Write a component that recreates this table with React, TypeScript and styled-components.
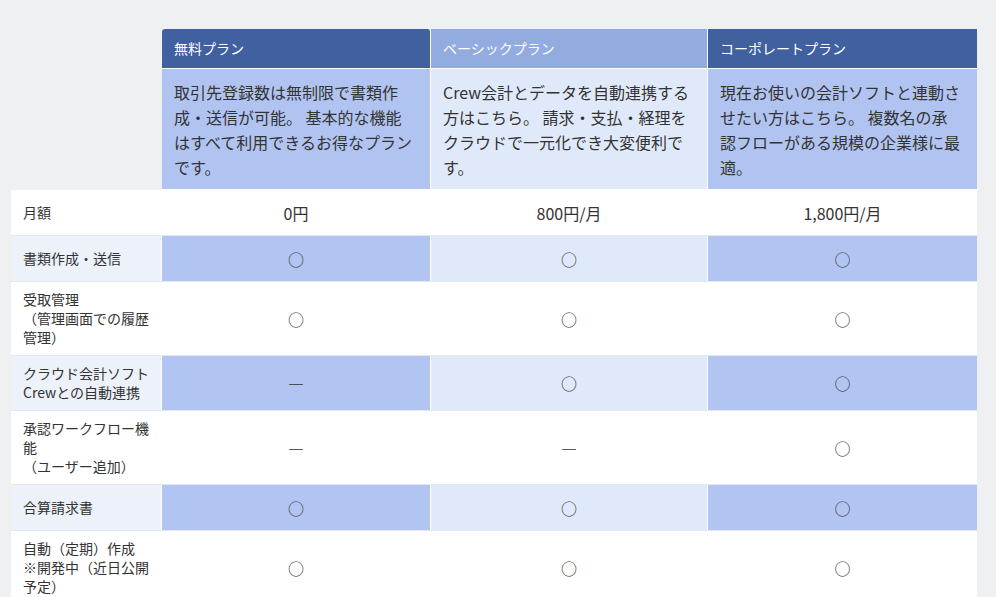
import React from 'react';
import styled, { createGlobalStyle, css } from 'styled-components';

const GlobalStyle = createGlobalStyle`
	html, body {
		margin: 0;
		padding: 0;
		background-color: #eff0f2;
		overflow: hidden;
	}
	body {
		font-family: "Noto Sans CJK JP", "Noto Sans", sans-serif;
		color: #333;
	}
`;

type Tone = 'dark' | 'light';

const plans: { name: string; tone: Tone; desc: string[] }[] = [
	{
		name: '無料プラン',
		tone: 'dark',
		desc: [
			'取引先登録数は無制限で書類作',
			'成・送信が可能。 基本的な機能',
			'はすべて利用できるお得なプラン',
			'です。',
		],
	},
	{
		name: 'ベーシックプラン',
		tone: 'light',
		desc: [
			'Crew会計とデータを自動連携する',
			'方はこちら。 請求・支払・経理を',
			'クラウドで一元化でき大変便利で',
			'す。',
		],
	},
	{
		name: 'コーポレートプラン',
		tone: 'dark',
		desc: [
			'現在お使いの会計ソフトと連動さ',
			'せたい方はこちら。 複数名の承',
			'認フローがある規模の企業様に最',
			'適。',
		],
	},
];

const OK = '○';
const NG = '―';

const features: { label: React.ReactNode; values: string[]; shaded: boolean }[] = [
	{ label: '月額', values: ['0円', '800円/月', '1,800円/月'], shaded: false },
	{ label: '書類作成・送信', values: [OK, OK, OK], shaded: true },
	{
		label: (
			<>
				受取管理
				<br />
				（管理画面での履歴管理）
			</>
		),
		values: [OK, OK, OK],
		shaded: false,
	},
	{ label: 'クラウド会計ソフトCrewとの自動連携', values: [NG, OK, OK], shaded: true },
	{
		label: (
			<>
				承認ワークフロー機能
				<br />
				（ユーザー追加）
			</>
		),
		values: [NG, NG, OK],
		shaded: false,
	},
	{ label: '合算請求書', values: [OK, OK, OK], shaded: true },
	{
		label: (
			<>
				自動（定期）作成
				<br />
				※開発中（近日公開予定）
			</>
		),
		values: [OK, OK, OK],
		shaded: false,
	},
];

const COLUMNS = '151px 269px 277px 269px';

const headBg = { dark: '#41609f', light: '#93ace0' };
const descBg = { dark: '#b1c4f1', light: '#e0e9f9' };
const cellBg = { dark: '#b2c5f2', light: '#e0e9fa' };

const App = () => {
	return (
		<>
			<GlobalStyle />
			<Page>
				<Table>
					<Head>
						<Corner />
						{plans.map((plan, i) => (
							<PlanName key={plan.name} $tone={plan.tone} $first={i === 0} $last={i === plans.length - 1}>
								{plan.name}
							</PlanName>
						))}
						{plans.map((plan, i) => (
							<PlanDesc key={plan.name} $tone={plan.tone} $last={i === plans.length - 1}>
								{plan.desc.map((line) => (
									<DescLine key={line}>{line}</DescLine>
								))}
							</PlanDesc>
						))}
					</Head>
					{features.map((feature, r) => (
						<Row key={r}>
							<Label $shaded={feature.shaded}>
								<span>{feature.label}</span>
							</Label>
							{feature.values.map((value, i) => (
								<Value
									key={i}
									$tone={plans[i].tone}
									$shaded={feature.shaded}
									$last={i === plans.length - 1}
								>
									{value}
								</Value>
							))}
						</Row>
					))}
				</Table>
			</Page>
		</>
	);
};

const Page = styled.div`
	padding: 29px 0 0 11px;
`;

const Table = styled.div`
	width: 966px;
`;

const Head = styled.div`
	display: grid;
	grid-template-columns: ${COLUMNS};
	grid-template-rows: 40px 121px;
`;

const Corner = styled.div`
	grid-row: 1 / 3;
`;

const PlanName = styled.div<{ $tone: Tone; $first: boolean; $last: boolean }>`
	box-sizing: border-box;
	display: flex;
	align-items: center;
	padding: 0 12px 1px;
	background-color: ${(p) => headBg[p.$tone]};
	border-bottom: 1px solid #fff;
	border-right: ${(p) => (p.$last ? 'none' : '1px solid #fff')};
	border-radius: ${(p) => (p.$first ? '3px 3px 0 0' : '0')};
	color: #fff;
	font-size: 14px;
	white-space: nowrap;
`;

const PlanDesc = styled.div<{ $tone: Tone; $last: boolean }>`
	box-sizing: border-box;
	padding: 11px 12px 9px;
	background-color: ${(p) => descBg[p.$tone]};
	border-bottom: 1px solid #fff;
	border-right: ${(p) => (p.$last ? 'none' : '1px solid #fff')};
	font-size: 16px;
	line-height: 25px;
	color: #333;
`;

const DescLine = styled.span`
	display: block;
	white-space: nowrap;
`;

const Row = styled.div`
	display: grid;
	grid-template-columns: ${COLUMNS};
	min-height: 46px;
	box-sizing: border-box;
	background-color: #fff;
	border-bottom: 1px solid #e4e8ee;
`;

const Label = styled.div<{ $shaded: boolean }>`
	box-sizing: border-box;
	display: flex;
	align-items: center;
	padding: 8px 12px;
	background-color: ${(p) => (p.$shaded ? '#edf1f9' : '#fff')};
	border-right: 1px solid #fff;
	font-size: 14px;
	line-height: 19px;
	color: #333;
`;

const Value = styled.div<{ $tone: Tone; $shaded: boolean; $last: boolean }>`
	box-sizing: border-box;
	display: flex;
	align-items: center;
	justify-content: center;
	background-color: #fff;
	${(p) =>
		p.$shaded &&
		css`
			background-color: ${cellBg[p.$tone]};
		`}
	border-right: ${(p) => (p.$last ? 'none' : '1px solid #fff')};
	font-size: 16px;
	color: #333;
`;

export default App;
